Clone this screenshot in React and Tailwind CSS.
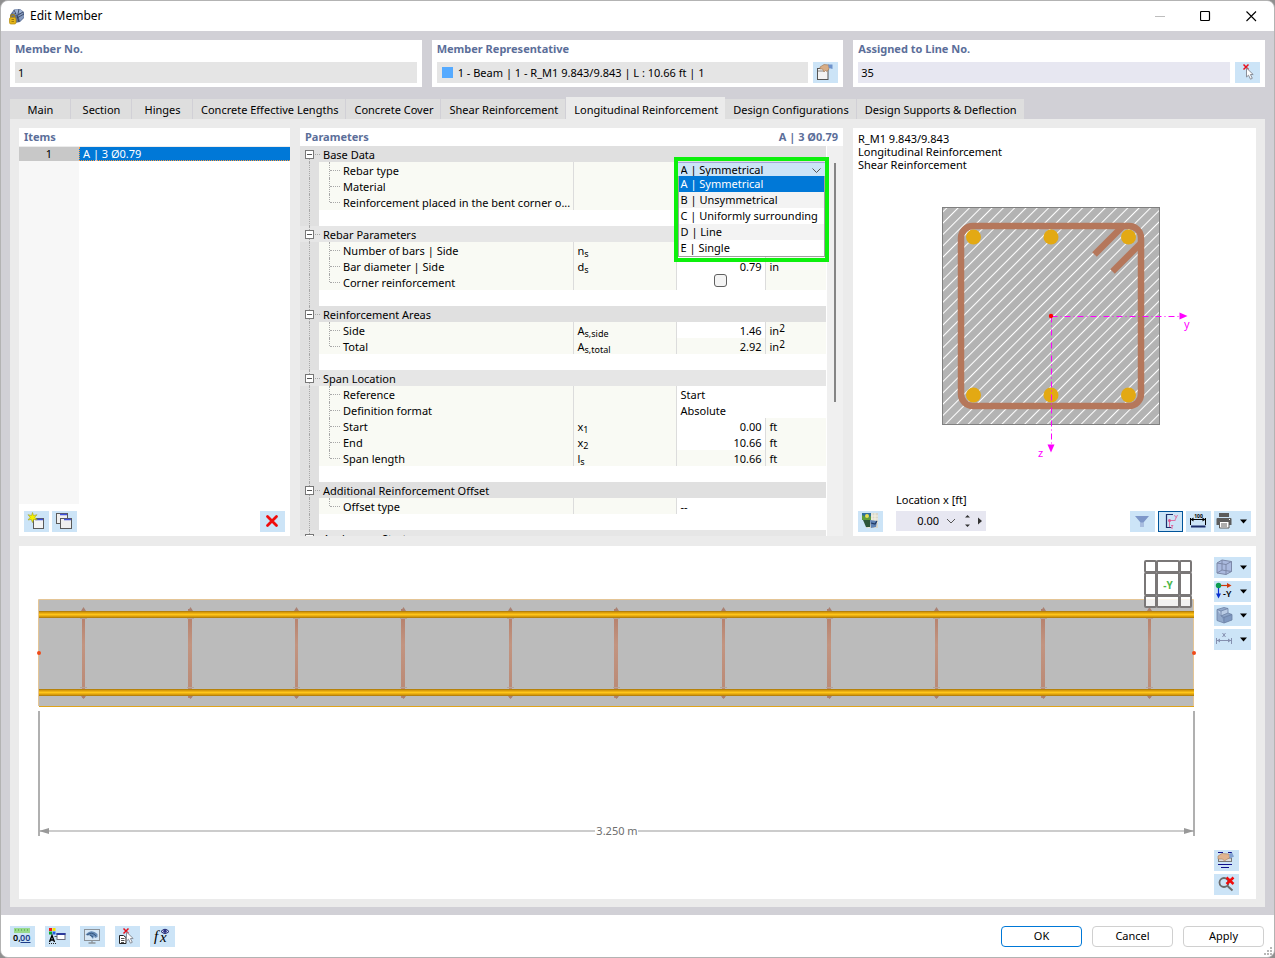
import React from 'react';

const tabs = [
  'Main',
  'Section',
  'Hinges',
  'Concrete Effective Lengths',
  'Concrete Cover',
  'Shear Reinforcement',
  'Longitudinal Reinforcement',
  'Design Configurations',
  'Design Supports & Deflection',
];

const rebarTypes = ['A | Symmetrical', 'B | Unsymmetrical', 'C | Uniformly surrounding', 'D | Line', 'E | Single'];

const groups = [
  {
    title: 'Base Data',
    rows: [
      { name: 'Rebar type', kind: 'select' },
      { name: 'Material', kind: 'text', value: '' },
      { name: 'Reinforcement placed in the bent corner o...', kind: 'text', value: '' },
    ],
  },
  {
    title: 'Rebar Parameters',
    rows: [
      { name: 'Number of bars | Side', symbol: 'n', sub: 's', value: '3' },
      { name: 'Bar diameter | Side', symbol: 'd', sub: 's', value: '0.79', unit: 'in' },
      { name: 'Corner reinforcement', kind: 'checkbox' },
    ],
  },
  {
    title: 'Reinforcement Areas',
    rows: [
      { name: 'Side', symbol: 'A', sub: 's,side', value: '1.46', unit: 'in', sup: '2' },
      { name: 'Total', symbol: 'A', sub: 's,total', value: '2.92', unit: 'in', sup: '2', locked: true },
    ],
  },
  {
    title: 'Span Location',
    rows: [
      { name: 'Reference', kind: 'text', value: 'Start' },
      { name: 'Definition format', kind: 'text', value: 'Absolute' },
      { name: 'Start', symbol: 'x', sub: '1', value: '0.00', unit: 'ft' },
      { name: 'End', symbol: 'x', sub: '2', value: '10.66', unit: 'ft' },
      { name: 'Span length', symbol: 'l', sub: 's', value: '10.66', unit: 'ft', locked: true },
    ],
  },
  {
    title: 'Additional Reinforcement Offset',
    rows: [{ name: 'Offset type', kind: 'text', value: '--' }],
  },
  { title: 'Anchorage Start', rows: [] },
];

const stirrups = [83, 190, 296, 403, 510, 616, 723, 829, 936, 1043, 1149];

/* Tool buttons: 25x21, or 37x21 when they carry a menu arrow */
const ToolButton = ({ label, active, children }) => (
  <button
    type="button"
    aria-label={label}
    className={`block h-[21px] w-[25px] shrink-0 bg-[#cce4f7] ${active ? 'outline outline-1 -outline-offset-1 outline-[#00549a]' : ''}`}
  >
    <svg viewBox="0 0 25 21" className="block h-full w-full">{children}</svg>
  </button>
);

const MenuButton = ({ label, children }) => (
  <button type="button" aria-label={label} className="block h-[21px] w-[37px] shrink-0 bg-[#cce4f7]">
    <svg viewBox="0 0 37 21" className="block h-full w-full">
      {children}
      <path d="M26 8.5h7l-3.5 4z" fill="#000" />
    </svg>
  </button>
);

const Cursor = () => (
  <path d="M11.5 6v9l2-1.8 2 4 1.8-.9-1.9-3.8h2.8z" fill="#fff" stroke="#8a8f99" />
);

const RedCross = () => <path d="M8.5 2.5l5 5m0-5l-5 5" stroke="#e8101c" strokeWidth="1.5" />;

const AppIcon = () => (
  <svg viewBox="0 0 17 17" className="h-[17px] w-[17px]">
    <path d="M2 7l4-5.5 6-.5 4 3v6l-4 4-5 1-5-4z" fill="#5d7096" />
    <path d="M6 2l6-1 3 3-5 2-5 1z" fill="#9db1d3" />
    <path d="M10 7l5-3 1 5-4 4z" fill="#8499bf" />
    <path d="M3 7l5-1.5M6 2l2 4m3-5l-1 5m5-2l-5 3m-1 3l7-4M9 7l2 7" stroke="#303d59" strokeWidth=".8" fill="none" />
    <path d="M2.8 10V8.500a1.900 1.900 0 013.800 0V10" fill="none" stroke="#a98518" strokeWidth="1.3" />
    <rect x="1.500" y="9.500" width="6.500" height="6.500" rx="1.500" fill="#e3b419" stroke="#b38a10" strokeWidth=".7" />
    <path d="M3.500 11.500H6m-2.500 2H6" stroke="#8d6b0a" strokeWidth=".8" />
  </svg>
);

const TitleBar = () => (
  <header className="flex h-[30px] shrink-0 items-center bg-white pl-[7px] text-[12px]">
    <AppIcon />
    <h1 className="ml-[5px] flex-1">Edit Member</h1>
    <button type="button" aria-label="Minimize" className="flex h-full w-[45px] items-center justify-center">
      <svg viewBox="0 0 11 11" className="h-[11px] w-[11px]"><path d="M0 5.5h10" stroke="#bdbdbd" /></svg>
    </button>
    <button type="button" aria-label="Maximize" className="flex h-full w-[45px] items-center justify-center">
      <svg viewBox="0 0 11 11" className="h-[11px] w-[11px]">
        <rect x=".5" y=".5" width="9" height="9" rx="1" fill="none" stroke="#000" strokeWidth="1.2" />
      </svg>
    </button>
    <button type="button" aria-label="Close" className="flex h-full w-[46px] items-center justify-center">
      <svg viewBox="0 0 11 11" className="h-[11px] w-[11px]"><path d="M.5.5l9.500 9.500m0-9.500l-9.500 9.500" stroke="#000" strokeWidth="1.1" /></svg>
    </button>
  </header>
);

const Field = ({ id, label, value, tone, swatch, children }) => (
  <div className="bg-white px-[5px] pb-1">
    <label htmlFor={id} className="block h-[22px] leading-[18px] font-bold text-[#5b6e99]">{label}</label>
    <div className="flex gap-[5px]">
      <div className={`flex h-[21px] min-w-0 flex-1 items-center pl-[3px] ${tone}`}>
        {swatch && <span className="mr-[5px] ml-[2px] h-[11px] w-[11px] shrink-0 bg-[#55aaff]" />}
        <input id={id} readOnly defaultValue={value} className="w-full min-w-0 bg-transparent pt-px outline-none" />
      </div>
      {children}
    </div>
  </div>
);

const Tabs = () => (
  <div role="tablist" className="flex h-[22px] shrink-0 items-end">
    {tabs.map((tab) => {
      const active = tab === 'Longitudinal Reinforcement';
      return (
        <button
          key={tab}
          type="button"
          role="tab"
          aria-selected={active}
          className={`min-w-[61px] pr-[7px] pl-2 whitespace-nowrap ${
            active ? 'h-[22px] bg-[#ebebeb] pt-1' : 'h-5 border-r border-[#d1d0d6] bg-[#dedede] pt-[2px]'
          }`}
        >
          {tab}
        </button>
      );
    })}
  </div>
);

const ItemsPanel = () => (
  <section className="flex min-h-0 flex-col bg-white">
    <h2 className="h-[18px] shrink-0 pl-[5px] leading-[18px] font-bold text-[#5b6e99]">Items</h2>
    <div className="flex min-h-0 flex-1 flex-col border-t border-[#ececec]">
      <button type="button" className="flex h-[14px] w-full text-left leading-[14px]">
        <span className="w-[60px] shrink-0 bg-[#c8c8c8] text-center">1</span>
        <span className="flex-1 border-b border-l border-dotted border-[#ff9a3c] bg-[#0078d7] pl-[3px] leading-[13px] text-white">A | 3 Ø0.79</span>
      </button>
      <div className="w-[60px] flex-1 bg-[#f7f7f7]" />
    </div>
    <div className="flex shrink-0 gap-[3px] px-[5px] pt-[7px] pb-1">
      <ToolButton label="New item">
        <rect x="9.5" y="7.5" width="10" height="10" fill="#f4f4f4" stroke="#5a5a5a" />
        <path d="M11 8.500h8" stroke="#4052e0" strokeWidth="1.500" />
        <path d="M8.500 1.500l1 3 3.500-.8-2.300 2.600 2.500 2.500-3.500-.4-1.200 3.200-1.200-3.200-3.300.6 2.200-2.700L4 3.700l3.500.8z" fill="#f5f000" stroke="#a0a028" strokeWidth=".6" />
      </ToolButton>
      <ToolButton label="Copy item">
        <rect x="4.5" y="2.5" width="11" height="10" fill="#f0f0f0" stroke="#5a5a5a" />
        <path d="M8 3.500h7" stroke="#4052e0" strokeWidth="1.500" />
        <rect x="8.5" y="7.5" width="11" height="10" fill="#f0f0f0" stroke="#5a5a5a" />
        <path d="M12 8.500h7" stroke="#4052e0" strokeWidth="1.500" />
      </ToolButton>
      <div className="flex-1" />
      <ToolButton label="Delete item">
        <path d="M7.500 5.500l9 9m0-9l-9 9" stroke="#f00c0c" strokeWidth="2.8" strokeLinecap="round" />
      </ToolButton>
    </div>
  </section>
);

const RebarTypeSelect = () => (
  <>
    <select
      id="rebar-type"
      defaultValue={rebarTypes[0]}
      className="block h-4 w-full appearance-none border-t border-[#a3a5dc] bg-[#cce4f7] pb-[2px] pl-1 leading-[13px] outline-none"
    >
      {rebarTypes.map((type) => <option key={type}>{type}</option>)}
    </select>
    <svg viewBox="0 0 9 6" className="absolute top-[6px] right-[5px] h-[6px] w-[9px]">
      <path d="M.5.5l4 4 4-4" fill="none" stroke="#555" />
    </svg>
    <ul role="listbox" aria-label="Rebar type" className="absolute top-[14px] right-[1px] left-[1px] z-10 border border-t-0 border-[#a0a0a0] bg-white">
      {rebarTypes.map((type, i) => (
        <li
          key={type}
          role="option"
          aria-selected={i === 0}
          className={`h-4 pl-[2px] leading-4 whitespace-nowrap ${i === 0 ? 'bg-[#0078d7] text-white' : i % 2 ? 'bg-[#f3f3f3]' : 'bg-white'}`}
        >
          {type}
        </li>
      ))}
    </ul>
    {/* highlight frame round the open list */}
    <div className="pointer-events-none absolute -top-[5px] -right-[3px] -left-[3px] z-20 h-[105px] border-4 border-[#0df00d]" />
  </>
);

const ParameterRow = ({ row, last }) => {
  const wide = row.kind === 'text' || row.kind === 'select';
  return (
    <tr className="h-4">
      <td className="relative bg-[#e0e0e0]">
        <span className="absolute inset-y-0 left-[9px] border-l border-dotted border-[#a8a8a8]" />
      </td>
      <th scope="row" className="relative truncate border-r border-[#dcdcdc] bg-[#f9faf4] pt-[2px] pl-6 text-left font-normal">
        <span className={`absolute top-0 left-[10px] border-l border-dotted border-[#a8a8a8] ${last ? 'h-2' : 'h-4'}`} />
        <span className="absolute top-2 left-[11px] w-[10px] border-t border-dotted border-[#a8a8a8]" />
        {row.kind === 'select' ? <label htmlFor="rebar-type">{row.name}</label> : row.name}
      </th>
      <td className="border-r border-[#dcdcdc] bg-[#f9faf4] pt-[2px] pl-1 whitespace-nowrap">
        {row.symbol}
        {row.sub && <sub className="-bottom-[2px] text-[9px]">{row.sub}</sub>}
      </td>
      {wide ? (
        <td colSpan={2} className={row.kind === 'select' ? 'relative' : 'pt-[2px] pl-1'}>
          {row.kind === 'select' ? <RebarTypeSelect /> : row.value}
        </td>
      ) : (
        <>
          {row.kind === 'checkbox' ? (
            <td className="border-r border-[#dcdcdc] bg-white align-top">
              <input
                type="checkbox"
                aria-label={row.name}
                className="mx-auto block h-[13px] w-[13px] appearance-none rounded-[3px] border border-[#606060] bg-[#f4f4f4]"
              />
            </td>
          ) : (
            <td className={`border-r border-[#dcdcdc] pt-[2px] pr-[3px] text-right ${row.locked ? 'bg-[#f9faf4]' : 'bg-white'}`}>
              {row.value}
            </td>
          )}
          <td className="bg-[#f9faf4] pt-[2px] pl-1">
            {row.unit}
            {row.sup && <sup className="-top-[3px] text-[10px]">{row.sup}</sup>}
          </td>
        </>
      )}
    </tr>
  );
};

const ParametersPanel = () => (
  <section className="flex min-h-0 flex-col bg-white">
    <div className="flex h-[18px] shrink-0 justify-between px-[5px] leading-[18px] font-bold text-[#5b6e99]">
      <h2>Parameters</h2>
      <span>A | 3 Ø0.79</span>
    </div>
    <div className="flex min-h-0 flex-1 overflow-hidden">
      <table className="mr-px h-max flex-1 table-fixed leading-[14px]">
        <colgroup>
          <col className="w-[19px]" />
          <col />
          <col className="w-[103px]" />
          <col className="w-[89px]" />
          <col className="w-[61px]" />
        </colgroup>
        {groups.map((group, g) => {
          const shade = g % 2 ? 'bg-[#e6e6e6]' : 'bg-[#e0e0e0]';
          return (
            <tbody key={group.title}>
              <tr className={`h-4 ${shade}`}>
                <td className="relative">
                  <span className={`absolute left-[9px] border-l border-dotted border-[#a8a8a8] ${g ? 'inset-y-0' : 'top-3 bottom-0'}`} />
                  <svg viewBox="0 0 16 9" className="absolute top-1 left-[5px] h-[9px] w-4">
                    <rect x=".5" y=".5" width="8" height="8" fill="#fff" stroke="#777" />
                    <path d="M2 4.5h5" stroke="#555" />
                    <path d="M10 4.5h5" stroke="#a8a8a8" strokeDasharray="1 1" />
                  </svg>
                </td>
                <th colSpan={4} scope="colgroup" className="pt-[2px] pl-1 text-left font-normal">{group.title}</th>
              </tr>
              {group.rows.map((row, i) => (
                <ParameterRow key={row.name} row={row} last={i === group.rows.length - 1} />
              ))}
              <tr className="h-4">
                <td className="relative bg-[#e0e0e0]">
                  <span className="absolute inset-y-0 left-[9px] border-l border-dotted border-[#a8a8a8]" />
                </td>
                <td colSpan={4} className="bg-white" />
              </tr>
            </tbody>
          );
        })}
      </table>
      <div className="w-4 shrink-0 bg-[#f0f0f0] pt-[17px]">
        <div className="mx-auto h-[64%] w-[2px] bg-[#858585]" />
      </div>
    </div>
  </section>
);

const SectionDrawing = () => (
  <svg viewBox="858 171 393 322" className="min-h-0 w-full flex-1">
    <defs>
      <pattern id="hatch" width="8" height="8" patternUnits="userSpaceOnUse" patternTransform="rotate(45)">
        <rect width="8" height="8" fill="#b3b3b3" />
        <path d="M.5 0v8" stroke="#fff" strokeWidth="1.1" />
      </pattern>
    </defs>
    <rect x="942.5" y="207.5" width="217" height="217" fill="url(#hatch)" stroke="#808080" />
    <rect x="961" y="226" width="180" height="180" rx="12" fill="none" stroke="#b5775b" strokeWidth="6.5" />
    <path d="M1123 226l-28.500 28.500M1141 243l-28.500 28.500" stroke="#b5775b" strokeWidth="6.5" />
    {[237, 395].map((y) => [973.5, 1051, 1128.5].map((x) => <circle key={`${x}-${y}`} cx={x} cy={y} r="7.5" fill="#e3a913" />))}
    <path d="M1051.500 316.500H1181M1051.500 316.500V446" stroke="#ff00ff" strokeDasharray="6 3 1 3" />
    <path d="M1179.500 312.500v7l8-3.500zM1047.500 444.500h7l-3.500 8z" fill="#ff00ff" />
    <circle cx="1051" cy="316" r="2.2" fill="#ff0000" />
    <text x="1184" y="328" fontSize="11" fill="#ff00ff">y</text>
    <text x="1038" y="457" fontSize="11" fill="#ff00ff">z</text>
  </svg>
);

const SectionPanel = () => (
  <section className="flex min-h-0 flex-col bg-white px-[5px] pt-1 pb-1">
    <p className="shrink-0 leading-[13px]">
      R_M1 9.843/9.843<br />
      Longitudinal Reinforcement<br />
      Shear Reinforcement
    </p>
    <SectionDrawing />
    <label htmlFor="location" className="mb-1 ml-[38px] shrink-0 leading-[14px]">Location x [ft]</label>
    <div className="flex shrink-0 gap-[3px]">
      <ToolButton label="Save picture">
        <path d="M8 2h12v15H8z" fill="#d9d7c9" />
        <path d="M11 2v15m3-15v15m3-15v15M8 5h12M8 8h12M8 11h12" stroke="#f4f1e2" />
        <rect x="4" y="2" width="9" height="7" fill="#5c9d3c" />
        <path d="M4 2h9v3L9 7 4 4z" fill="#2f6f9c" />
        <circle cx="9" cy="5" r="2" fill="#e7e04a" />
        <path d="M5 9h7v7H8z" fill="#2c5539" />
        <path d="M12 9l7 1-1 6-5 1z" fill="#5e82b5" />
        <path d="M13 12l4 1 2-3" fill="none" stroke="#1f3763" strokeWidth="1.2" />
      </ToolButton>
      <div className="ml-[10px] flex h-5 w-[90px] items-center bg-[#e7e7f1]">
        <input id="location" defaultValue="0.00" className="w-[43px] bg-transparent pt-px text-right outline-none" />
        <svg viewBox="0 0 47 20" className="h-5 w-[47px]">
          <path d="M8 8l4 4 4-4" fill="none" stroke="#555" />
          <path d="M26 6.500h5L28.500 4zM26 13.500h5L28.500 16zM39 6.500v7l4-3.500z" fill="#333" />
        </svg>
      </div>
      <div className="flex-1" />
      <ToolButton label="Filter">
        <path d="M5 5h14l-5.500 6.500V16h-3v-4.500z" fill="#7e97c9" />
        <path d="M10.500 11.500h3V16h-3z" fill="#a8bcdf" />
      </ToolButton>
      <ToolButton label="Show section axes" active>
        <path d="M15 3.500H8.500v13H13" fill="none" stroke="#1c2d6b" strokeWidth="1.2" />
        <path d="M11.500 9.500h6M11.500 9.500V16" stroke="#e0558f" strokeWidth=".8" />
        <circle cx="11.5" cy="9.500" r="1.5" fill="#e0558f" />
        <path d="M16.500 4l1.300 2.500M19.500 4l-2.500 5M13 14.500h2l-2 2.500h2" fill="none" stroke="#e0558f" strokeWidth=".8" />
      </ToolButton>
      <ToolButton label="Show dimensions">
        <text x="12.5" y="6.500" fontSize="5" fontWeight="bold" textAnchor="middle">100</text>
        <path d="M5 8.500h14M4.500 7v7M19.500 7v7" stroke="#000" />
        <path d="M4.500 8.500l3-2v4zM19.500 8.500l-3-2v4z" fill="#000" />
        <path d="M5 15.500h14.500" stroke="#1c2d6b" strokeWidth="2" />
      </ToolButton>
      <MenuButton label="Print">
        <path d="M5 2h10v4H5zM2.500 8q0-1 1-1h13q1 0 1 1v6h-15z" fill="#5c5c5c" />
        <path d="M5.500 10.500h9.500V17H5.500z" fill="#fff" stroke="#5c5c5c" />
        <path d="M7 13h6M7 15h6" stroke="#5c5c5c" />
        <path d="M15 8.500h1" stroke="#fff" />
      </MenuButton>
    </div>
  </section>
);

const BeamDrawing = () => (
  <svg viewBox="19 546 1195 353" className="h-full min-w-0 flex-1">
    <defs>
      <linearGradient id="bar" x1="0" y1="0" x2="0" y2="1">
        <stop offset="0" stopColor="#a3740c" />
        <stop offset=".2" stopColor="#d79a0a" />
        <stop offset=".5" stopColor="#ffc61a" />
        <stop offset=".8" stopColor="#d79a0a" />
        <stop offset="1" stopColor="#a3740c" />
      </linearGradient>
      <linearGradient id="stirrup" x1="0" y1="0" x2="0" y2="1">
        <stop offset="0" stopColor="#b27c68" />
        <stop offset=".4" stopColor="#c29480" />
        <stop offset="1" stopColor="#b98874" />
      </linearGradient>
    </defs>
    <rect x="39" y="600" width="1155" height="106" fill="#bbb" />
    <path d="M38.500 706V599.500h1155V706" fill="none" stroke="#e4c596" />
    <path d="M39 706.500h1155" stroke="#dfa31a" />
    {stirrups.map((x, i) => (
      <g key={x}>
        <rect x={i % 2 ? x - 2 : x - 1} y="609" width={i % 2 ? 4 : 3} height="89" fill="url(#stirrup)" />
        <path d={`M${x - 2} 611l2.500-4 2.500 4zM${x - 2} 696l2.500 3 2.500-3z`} fill="#a98172" />
        <path d={`M${x - 3} 618.500h7M${x - 3} 687.500h7`} stroke="#b3a39c" />
      </g>
    ))}
    <rect x="39" y="611" width="1155" height="7" fill="url(#bar)" />
    <rect x="39" y="689" width="1155" height="7" fill="url(#bar)" />
    <circle cx="39" cy="653" r="2" fill="#f04a18" />
    <circle cx="1194" cy="653" r="2" fill="#f04a18" />

    {/* dimension line */}
    <path d="M39 711v125M1194 711v125" stroke="#b0b0b0" strokeWidth="2" />
    <path d="M40 831h555M638 831h556" stroke="#999" />
    <path d="M39 831l10-3v6zM1194 831l-10-3v6z" fill="#999" />
    <text x="617" y="835" fontSize="11" textAnchor="middle" fill="#6e6e6e">3.250 m</text>

    {/* view cube */}
    {[[1145, 11], [1157, 22], [1180, 11]].map(([x, w]) =>
      [[561, 11], [573, 22], [596, 11]].map(([y, h]) => (
        <rect key={`${x}-${y}`} x={x} y={y} width={w} height={h} rx="1" fill="#fff" fillOpacity=".8" stroke="#7a7777" strokeWidth="2" />
      ))
    )}
    <text x="1168" y="589" fontSize="10" fontWeight="bold" textAnchor="middle" fill="#4cb74c">-Y</text>
  </svg>
);

const BeamPanel = () => (
  <section className="flex min-h-0 flex-[353] bg-white pr-[5px]">
    <BeamDrawing />
    <div className="flex w-[37px] shrink-0 flex-col gap-[3px] pt-[11px] pb-1">
      <MenuButton label="Display mode">
        <path d="M3 6l5-3 9.500 1.500v10L12 17.500 3 16z" fill="#aab9de" />
        <path d="M3 6l9 1.500v10L3 16zM12 7.500l5.500-3v10l-5.500 3M3 6l5-3 9.500 1.500M8 3v10l9.500 1.500M8 13l-5 3" fill="none" stroke="#7c88a8" />
      </MenuButton>
      <MenuButton label="View direction">
        <path d="M5 4.500h9" stroke="#cf3a0c" strokeWidth="1.2" />
        <path d="M13 2l4.500 2.500L13 7z" fill="#cf3a0c" />
        <path d="M4.500 5v8" stroke="#0930d0" strokeWidth="1.2" />
        <path d="M2 12.500h5l-2.500 5z" fill="#0930d0" />
        <circle cx="4.5" cy="4.5" r="2.7" fill="#0c9c50" />
        <text x="9" y="16" fontSize="9" fontWeight="600">-Y</text>
      </MenuButton>
      <MenuButton label="Solid view">
        <path d="M3 4.500l7-2 4 1v4.500l4 1.500V15l-8 3-7-2.500z" fill="#93aacb" />
        <path d="M3 4.500L7 6l7-2.500V8L7 10.500z" fill="#b9cbe4" />
        <path d="M8 12l8-3 2 .5V15l-8 3z" fill="#8099c0" />
        <path d="M3 4.500L7 6l7-2.500M7 6v5l3 1.500L18 9.500M10 12.500V18M3 4.500v11l7 2.500 8-3V9.500l-4-1.500V3.500l-4-1zM7 11l7-3" fill="none" stroke="#6d82a5" strokeWidth=".8" />
      </MenuButton>
      <MenuButton label="Dimensions">
        <path d="M2.500 9v6M17.500 9v6M3 11.500h14M8.500 4l3 4m0-4l-3 4" fill="none" stroke="#8590b0" />
        <path d="M3 11.500l3-2v4zM17 11.500l-3-2v4z" fill="#8590b0" />
      </MenuButton>
      <div className="flex-1" />
      <ToolButton label="Edit display">
        <path d="M4 2.500h5m5 0h4M4 14.500h14M7 17.500h8" stroke="#10108c" />
        <rect x="4.5" y="8" width="13" height="3.5" fill="#ddd" stroke="#777" />
        <path d="M4 6l4-2.500 7 .5.500 4-3 1.500-2 1.500-2-2H4z" fill="#e0b48f" stroke="#a5805f" strokeWidth=".6" />
        <path d="M15 4l3-1.500 2 4-4 2z" fill="#7f9fd0" />
      </ToolButton>
      <ToolButton label="Reset zoom">
        <circle cx="10" cy="8.500" r="4.500" fill="none" stroke="#6b6b6b" strokeWidth="1.8" />
        <path d="M13.500 12l5 4.500" stroke="#6b6b6b" strokeWidth="2" />
        <path d="M12.500 3.500l7 6.500m0-6.500l-7 6.500" stroke="#f00c0c" strokeWidth="2.5" />
      </ToolButton>
    </div>
  </section>
);

const DialogButton = ({ primary, children }) => (
  <button
    type="button"
    className={`h-[21px] w-[81px] rounded-[4px] border bg-white pt-px ${primary ? 'border-[#0078d7]' : 'border-[#d0d0d0]'}`}
  >
    {children}
  </button>
);

const Footer = () => (
  <footer className="relative flex h-[42px] shrink-0 items-center gap-[10px] bg-white pr-[10px] pl-[9px]">
    <ToolButton label="Units and decimal places">
      <rect x="4" y="2" width="16" height="5" fill="#98d98c" />
      <path d="M5.500 3v2m3-2v2m3-2v2m3-2v2m3-2v2" stroke="#6eb863" />
      <text x="3" y="15" fontSize="9" fontWeight="600">0,</text>
      <text x="10" y="15" fontSize="9" fontWeight="600" fill="#1c3c88">00</text>
      <path d="M10.500 16.500h10" stroke="#1c3c88" />
    </ToolButton>
    <ToolButton label="Display properties">
      <rect x="4" y="2" width="3" height="3" fill="#f01818" />
      <rect x="7.5" y="2" width="3" height="3" fill="#f5e400" />
      <rect x="4" y="5.5" width="3" height="3" fill="#0ea82c" />
      <rect x="7.5" y="5.5" width="3" height="3" fill="#2060e0" />
      <path d="M4.500 16L7 9.500 9.500 16M5.500 14h3" fill="none" stroke="#000" strokeWidth="1.4" />
      <path d="M4 17.500h8" stroke="#222" strokeDasharray="1 1" />
      <path d="M9.500 10.500h3" stroke="#555" />
      <rect x="12" y="7.5" width="8" height="6" fill="#fff" stroke="#6b6b7a" />
      <path d="M11.500 8h9" stroke="#2c3a9c" strokeWidth="2" />
    </ToolButton>
    <ToolButton label="Visibility">
      <rect x="4.5" y="3.5" width="15" height="11" fill="#d7e7f5" stroke="#8b9299" />
      <path d="M12 15v2.500M8.500 17h7" stroke="#8b9299" strokeWidth="1.3" />
      <path d="M5.500 9Q11 2 17.500 8v3l-2.500 1-1-2-1 3-3-3.500z" fill="#6489b5" />
      <path d="M7 9q5-4 9 1M10 9l3 2" fill="none" stroke="#36587f" />
    </ToolButton>
    <ToolButton label="Select object">
      <RedCross />
      <path d="M4.500 9.500h4l2.500 2v6H4.500z" fill="#fff" stroke="#222" />
      <path d="M6 12.500h3.500M6 14.500h3.500M6 16.500h3" stroke="#222" strokeWidth=".8" />
      <Cursor />
    </ToolButton>
    <ToolButton label="Formula">
      <text x="4" y="15" fontSize="15" fontStyle="italic" fontFamily="Liberation Serif, serif">f</text>
      <text x="10" y="16" fontSize="15" fontStyle="italic" fontFamily="Liberation Serif, serif">x</text>
      <path d="M11 5.500q4-4.500 8 0-4 4-8 0z" fill="#dfe3f5" stroke="#1f2670" />
      <circle cx="15" cy="5.300" r="1.7" fill="#2a3185" />
    </ToolButton>
    <div className="flex-1" />
    <DialogButton primary>OK</DialogButton>
    <DialogButton>Cancel</DialogButton>
    <DialogButton>Apply</DialogButton>
    <svg viewBox="0 0 8 8" className="absolute right-[2px] bottom-[2px] h-2 w-2">
      <path d="M0 7h2M3 7h2M6 7h2M3 4h2M6 4h2M6 1h2" stroke="#b8b8b8" strokeWidth="2" />
    </svg>
  </footer>
);

const App = () => (
  <div className="h-screen bg-[#8f8f8f]">
    <main className="flex h-full flex-col overflow-hidden rounded-lg border border-[#b3b3b3] bg-[#d1d0d6] font-['Noto_Sans','Liberation_Sans',sans-serif] text-[11px] text-black">
      <TitleBar />
      <div className="flex min-h-0 flex-1 flex-col px-[9px] pt-[9px] pb-2">
        <div className="mb-[10px] grid shrink-0 grid-cols-3 gap-[10px]">
          <Field id="member-no" label="Member No." value="1" tone="bg-[#e5e5e5]" />
          <Field
            id="member-representative"
            label="Member Representative"
            value="1 - Beam | 1 - R_M1 9.843/9.843 | L : 10.66 ft | 1"
            tone="bg-[#e5e5e5]"
            swatch
          >
            <ToolButton label="Edit representative">
              <rect x="4.5" y="6.5" width="10.5" height="11" fill="#f3f3f3" stroke="#555" />
              <path d="M5 9h6" stroke="#888" />
              <path d="M7 5l4-2.500 5 .5v4l-2 2.500-1.500-1L11 10 9.500 7H7z" fill="#d8ad86" stroke="#9a7453" strokeWidth=".6" />
              <path d="M15 2.500h4.500V7L16 6z" fill="#6f93cc" />
            </ToolButton>
          </Field>
          <Field id="assigned-line" label="Assigned to Line No." value="35" tone="bg-[#e7e7f1]">
            <ToolButton label="Pick line">
              <RedCross />
              <Cursor />
            </ToolButton>
          </Field>
        </div>
        <Tabs />
        <div className="flex min-h-0 flex-1 flex-col gap-[10px] bg-[#ebebeb] px-[9px] pt-[9px] pb-2">
          <div className="grid min-h-0 flex-[408] grid-cols-[271fr_543fr_403fr] grid-rows-[minmax(0,1fr)] gap-[10px]">
            <ItemsPanel />
            <ParametersPanel />
            <SectionPanel />
          </div>
          <BeamPanel />
        </div>
      </div>
      <Footer />
    </main>
  </div>
);

export default App;
